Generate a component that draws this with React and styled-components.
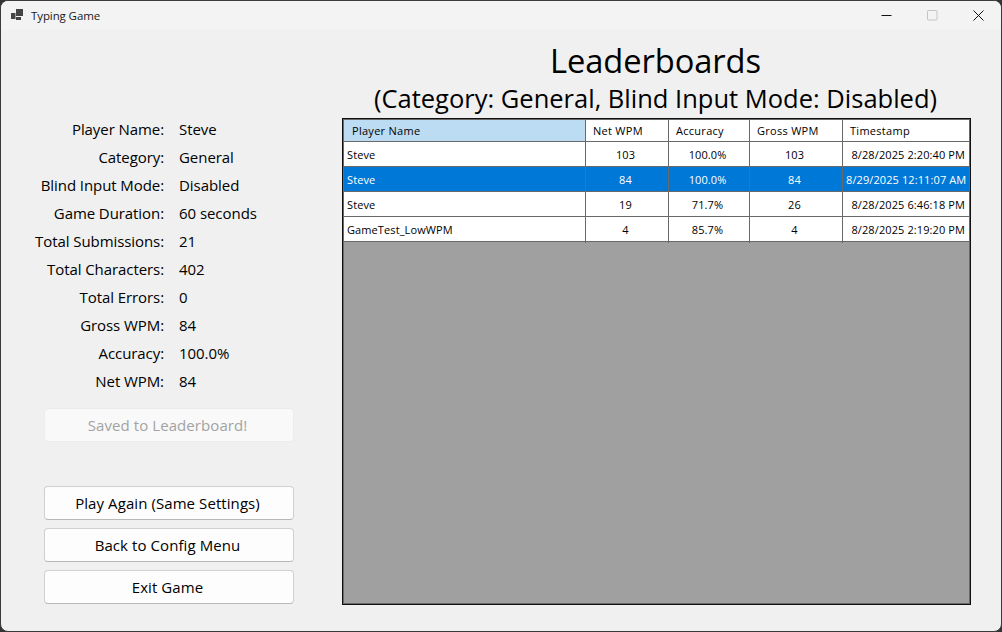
import React from "react";
import styled, { createGlobalStyle } from "styled-components";

const Global = createGlobalStyle`
  html, body { margin: 0; padding: 0; background: #333; overflow: hidden; }
  * { box-sizing: border-box; }
`;

const FONT = `"Open Sans", "Noto Sans", "Liberation Sans", sans-serif`;

const Window = styled.div`
  width: 1002px;
  height: 632px;
  background: #f0f0f0;
  border: 1px solid #3a3a3a;
  border-radius: 8px;
  overflow: hidden;
  display: flex;
  flex-direction: column;
  font-family: ${FONT};
  color: #000;
`;

const TitleBar = styled.div`
  height: 29px;
  flex: none;
  display: flex;
  align-items: center;
  background: #f3f3f3;
  padding-left: 10px;
`;

const AppIcon = styled.svg`
  margin-bottom: 2px;
`;

const AppTitle = styled.span`
  font-size: 11.5px;
  margin-left: 8px;
  letter-spacing: -0.1px;
  color: #1a1a1a;
`;

const WinControls = styled.div`
  margin-left: auto;
  display: flex;
`;

const WinButton = styled.div`
  width: 46px;
  height: 29px;
  display: flex;
  align-items: center;
  justify-content: center;
`;

const Body = styled.div`
  flex: 1;
  display: flex;
  min-height: 0;
`;

const LeftPanel = styled.div`
  width: 341px;
  flex: none;
  padding: 85px 0 0 43px;
  display: flex;
  flex-direction: column;
`;

const Stats = styled.div`
  display: grid;
  grid-template-columns: 120px 1fr;
  grid-auto-rows: 28px;
  column-gap: 15px;
  margin-bottom: 13px;
`;

const StatLabel = styled.div`
  font-size: 15px;
  line-height: 28px;
  text-align: right;
  letter-spacing: -0.08px;
  white-space: nowrap;
  justify-self: end;
`;

const StatValue = styled.div`
  font-size: 15px;
  line-height: 28px;
  letter-spacing: -0.05px;
  white-space: nowrap;
`;

const ActionButton = styled.button`
  width: 250px;
  height: 34px;
  flex: none;
  margin-top: ${(p) => p.$gap}px;
  padding: 0 3px 0 0;
  background: ${(p) => (p.disabled ? "#f9f9f9" : "#fdfdfd")};
  border: 1px solid ${(p) => (p.disabled ? "#ececec" : "#d0d0d0")};
  border-bottom-color: ${(p) => (p.disabled ? "#ececec" : "#b8b8b8")};
  border-radius: 4px;
  font-family: ${FONT};
  font-size: 15px;
  letter-spacing: 0.08px;
  color: ${(p) => (p.disabled ? "#a3a3a3" : "#000")};
`;

const RightPanel = styled.div`
  flex: 1;
  min-width: 0;
  display: flex;
  flex-direction: column;
  padding: 0 30px 26px 0;
`;

const Heading = styled.div`
  text-align: center;
  white-space: nowrap;
  height: 88px;
  padding: 10px 2px 0 0;
`;

const MainTitle = styled.div`
  font-size: 32.7px;
  line-height: 42px;
  letter-spacing: -0.1px;
`;

const SubTitle = styled.div`
  font-size: 25.5px;
  line-height: 33px;
`;

const Grid = styled.div`
  flex: 1;
  background: #a0a0a0;
  border: 1px solid #101010;
  box-shadow: inset 0 0 0 1px #696969;
  padding: 1px;
  min-height: 0;
`;

const Row = styled.div`
  display: grid;
  grid-template-columns: 242px 83px 81px 93px 1fr;
  height: ${(p) => p.$h}px;
  background: ${(p) => (p.$selected ? "#0078d7" : "#fff")};
  color: ${(p) => (p.$selected ? "#fff" : "#000")};
  border-bottom: 1px solid #696969;
  font-size: 11px;
`;

const HeaderCell = styled.div`
  line-height: 21px;
  padding-left: ${(p) => p.$pad}px;
  background: ${(p) => (p.$active ? "#bcdcf4" : "#fff")};
  border-right: 1px solid #696969;
  letter-spacing: 0.28px;
  white-space: nowrap;
  &:last-child { border-right: 0; }
`;

const Cell = styled.div`
  line-height: 26px;
  padding: 0 ${(p) => (p.$align === "right" ? 4 : 3)}px 0 ${(p) => (p.$align ? 3 : 0)}px;
  text-align: ${(p) => p.$align || "center"};
  border-right: 1px solid #696969;
  letter-spacing: 0.1px;
  white-space: nowrap;
  &:last-child { border-right: 0; }
`;

const stats = [
  ["Player Name:", "Steve"],
  ["Category:", "General"],
  ["Blind Input Mode:", "Disabled"],
  ["Game Duration:", "60 seconds"],
  ["Total Submissions:", "21"],
  ["Total Characters:", "402"],
  ["Total Errors:", "0"],
  ["Gross WPM:", "84"],
  ["Accuracy:", "100.0%"],
  ["Net WPM:", "84"],
];

const headers = [["Player Name", 8, true], ["Net WPM", 7], ["Accuracy", 7], ["Gross WPM", 7], ["Timestamp", 7]];

const rows = [
  ["Steve", "103", "100.0%", "103", "8/28/2025 2:20:40 PM"],
  ["Steve", "84", "100.0%", "84", "8/29/2025 12:11:07 AM", true],
  ["Steve", "19", "71.7%", "26", "8/28/2025 6:46:18 PM"],
  ["GameTest_LowWPM", "4", "85.7%", "4", "8/28/2025 2:19:20 PM"],
];

export default function App() {
  return (
    <>
      <Global />
      <Window>
        <TitleBar>
          <AppIcon width="12" height="11" viewBox="0 0 12 11">
            <rect x="0" y="4" width="4.5" height="6" fill="#444" />
            <rect x="5" y="0" width="7" height="7" fill="#444" />
            <rect x="5" y="8" width="5" height="3" fill="#444" />
          </AppIcon>
          <AppTitle>Typing Game</AppTitle>
          <WinControls>
            <WinButton>
              <svg width="11" height="11" viewBox="0 0 11 11"><path d="M0.5 5.5H10.5" stroke="#111" strokeWidth="1" /></svg>
            </WinButton>
            <WinButton>
              <svg width="11" height="11" viewBox="0 0 11 11"><rect x="0.5" y="0.5" width="9.5" height="9.5" rx="1" fill="none" stroke="#c4c4c4" /></svg>
            </WinButton>
            <WinButton>
              <svg width="11" height="11" viewBox="0 0 11 11"><path d="M0.5 0.5L10.5 10.5M10.5 0.5L0.5 10.5" stroke="#111" strokeWidth="1" /></svg>
            </WinButton>
          </WinControls>
        </TitleBar>
        <Body>
          <LeftPanel>
            <Stats>
              {stats.map(([label, value]) => (
                <React.Fragment key={label}>
                  <StatLabel>{label}</StatLabel>
                  <StatValue>{value}</StatValue>
                </React.Fragment>
              ))}
            </Stats>
            <ActionButton disabled $gap={0}>Saved to Leaderboard!</ActionButton>
            <ActionButton $gap={44}>Play Again (Same Settings)</ActionButton>
            <ActionButton $gap={8}>Back to Config Menu</ActionButton>
            <ActionButton $gap={8}>Exit Game</ActionButton>
          </LeftPanel>
          <RightPanel>
            <Heading>
              <MainTitle>Leaderboards</MainTitle>
              <SubTitle>(Category: General, Blind Input Mode: Disabled)</SubTitle>
            </Heading>
            <Grid>
              <Row $h={22}>
                {headers.map(([h, pad, active]) => (
                  <HeaderCell key={h} $pad={pad} $active={active}>{h}</HeaderCell>
                ))}
              </Row>
              {rows.map((r, i) => (
                <Row key={i} $h={25} $selected={r[5]}>
                  <Cell $align="left">{r[0]}</Cell>
                  <Cell>{r[1]}</Cell>
                  <Cell>{r[2]}</Cell>
                  <Cell>{r[3]}</Cell>
                  <Cell $align="right">{r[4]}</Cell>
                </Row>
              ))}
            </Grid>
          </RightPanel>
        </Body>
      </Window>
    </>
  );
}
